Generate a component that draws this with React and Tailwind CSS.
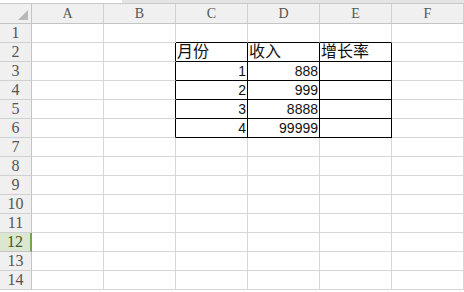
const cols = ['A', 'B', 'C', 'D', 'E', 'F'];

// sheet data: [row][colIndex] = { v, right }
const data = {
  2: { 2: { v: '月份', cjk: true }, 3: { v: '收入', cjk: true }, 4: { v: '增长率', cjk: true } },
  3: { 2: { v: '1', right: true }, 3: { v: '888', right: true } },
  4: { 2: { v: '2', right: true }, 3: { v: '999', right: true } },
  5: { 2: { v: '3', right: true }, 3: { v: '8888', right: true } },
  6: { 2: { v: '4', right: true }, 3: { v: '99999', right: true } },
};

function Cell({ r, c }) {
  const cell = data[r]?.[c];
  // black borders around the C2:E6 block
  const blackRight = r >= 2 && r <= 6 && c >= 1 && c <= 4;
  const blackBottom = r >= 1 && r <= 6 && c >= 2 && c <= 4;
  return (
    <div
      className={`w-[72px] h-[19px] shrink-0 border-r border-b flex items-center px-[1px] overflow-hidden whitespace-nowrap leading-none text-[#111] ${cell?.cjk ? 'text-[16px]' : 'text-[14px]'} ${blackRight ? 'border-r-black' : 'border-r-[#d6d6d6]'} ${blackBottom ? 'border-b-black' : 'border-b-[#d6d6d6]'} ${cell?.right ? 'justify-end' : 'justify-start'}`}
      style={{ fontFamily: '"Liberation Sans", "Noto Sans CJK SC", sans-serif' }}
    >
      {cell ? cell.v : null}
    </div>
  );
}

export default function App() {
  const rows = Array.from({ length: 14 }, (_, i) => i + 1);
  return (
    <div className="w-[464px] h-[292px] bg-white overflow-hidden select-none">
      {/* top strip */}
      <div className="flex h-[4px] border-b border-[#c9c9c9]">
        <div className="w-[122px] bg-white" />
        <div className="flex-1 bg-[#e4e4e4]" />
      </div>

      {/* column header */}
      <div className="flex h-[20px] bg-[#f0f0f0] border-b border-[#c4c4c4]">
        <div className="w-[32px] shrink-0 border-r border-[#c4c4c4] relative">
          <svg className="absolute right-[3px] bottom-[3px]" width="10" height="10" viewBox="0 0 10 10">
            <polygon points="10,0 10,10 0,10" fill="#b8b8b8" />
          </svg>
        </div>
        {cols.map((c) => (
          <div
            key={c}
            className="w-[72px] shrink-0 border-r border-[#d0d0d0] flex items-center justify-center text-[14px] text-[#555] leading-none"
            style={{ fontFamily: '"Liberation Serif", serif' }}
          >
            {c}
          </div>
        ))}
      </div>

      {/* rows */}
      {rows.map((r) => {
        const selected = r === 12;
        return (
          <div key={r} className="flex">
            <div
              className={`w-[32px] h-[19px] shrink-0 border-b flex items-center justify-center text-[16px] leading-none ${selected ? 'bg-[#dbe8cf] text-[#3e5a2c] border-b-[#c4c4c4] border-r-2 border-r-[#6ea84a]' : 'bg-[#f0f0f0] text-[#555] border-b-[#d0d0d0] border-r border-r-[#c4c4c4]'}`}
              style={{ fontFamily: '"Liberation Serif", serif' }}
            >
              {r}
            </div>
            {cols.map((c, ci) => (
              <Cell key={c} r={r} c={ci} />
            ))}
          </div>
        );
      })}
    </div>
  );
}
